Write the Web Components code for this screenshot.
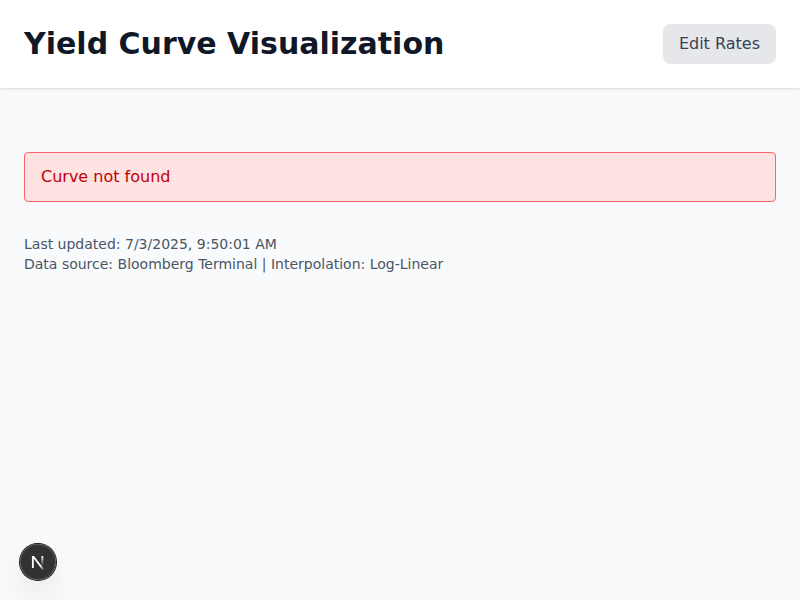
<!DOCTYPE html>
<html lang="en">
<head>
<meta charset="utf-8">
<title>Yield Curve Visualization</title>
<style>
body{margin:0;font-family:"DejaVu Sans",sans-serif;font-size:16px;line-height:24px;background:#f9fafb;color:#171717}
</style>
</head>
<body>
<curve-page></curve-page>
<script>
const define = (name, html) => customElements.define(name, class extends HTMLElement {
  constructor() {
    super();
    this.attachShadow({mode: "open"}).innerHTML = html;
  }
});

define("app-button", `<style>
:host{display:block}
button{display:block;margin:0;border:0;padding:8px 16px;border-radius:8px;background:#e5e7eb;color:#364153;font:inherit;line-height:24px}
</style><button><slot></slot></button>`);

define("page-header", `<style>
:host{display:flex;justify-content:space-between;align-items:center;padding:24px;background:#fff;box-shadow:0 1px 3px 0 rgba(0,0,0,.1),0 1px 2px -1px rgba(0,0,0,.1)}
h1{margin:0;font-size:30px;line-height:36px;font-weight:700;color:#101828}
</style><h1><slot></slot></h1><slot name="action"></slot>`);

define("error-alert", `<style>
:host{display:block;padding:12px 16px;border:1px solid #ff6467;border-radius:4px;background:#ffe2e2;color:#c10007}
</style><slot></slot>`);

define("curve-meta", `<style>
:host{display:block;font-size:14px;line-height:20px;color:#4a5565}
::slotted(p){margin:0}
</style><slot></slot>`);

define("dev-badge", `<style>
:host{position:fixed;left:20px;bottom:20px;display:block;width:36px;height:36px;border-radius:50%;background:rgba(0,0,0,.8);box-shadow:0 0 0 1px #171717,inset 0 0 0 1px rgba(255,255,255,.14),0 16px 32px -8px rgba(0,0,0,.24)}
svg{display:block}
</style><svg width="36" height="36" viewBox="0 0 36 36" fill="none">
<defs>
<linearGradient id="a" x1="9.95" y1="11.1" x2="15.4" y2="18.1" gradientUnits="userSpaceOnUse"><stop stop-color="#fff"/><stop offset=".604" stop-color="#fff" stop-opacity="0"/><stop offset="1" stop-color="#fff" stop-opacity="0"/></linearGradient>
<linearGradient id="b" x1="11.8" y1="1" x2="11.8" y2="11" gradientUnits="userSpaceOnUse"><stop stop-color="#fff"/><stop offset="1" stop-color="#fff" stop-opacity="0"/></linearGradient>
<clipPath id="c"><rect x="1" y="1" width="14" height="15"/></clipPath>
</defs>
<g transform="translate(10.5 11)" clip-path="url(#c)" stroke-width="1.86"><path d="M13.3 15.2L2.34 1V13" stroke="url(#a)"/><path d="M11.825 1V13.1" stroke="url(#b)"/></g>
</svg>`);

define("curve-page", `<style>
:host{display:block;min-height:100vh}
main{display:flex;flex-direction:column;gap:32px;padding:64px 24px}
</style>
<page-header>Yield Curve Visualization<app-button slot="action">Edit Rates</app-button></page-header>
<main>
<error-alert>Curve not found</error-alert>
<curve-meta><p>Last updated: 7/3/2025, 9:50:01 AM</p><p>Data source: Bloomberg Terminal | Interpolation: Log-Linear</p></curve-meta>
</main>
<dev-badge></dev-badge>`);
</script>
</body>
</html>
